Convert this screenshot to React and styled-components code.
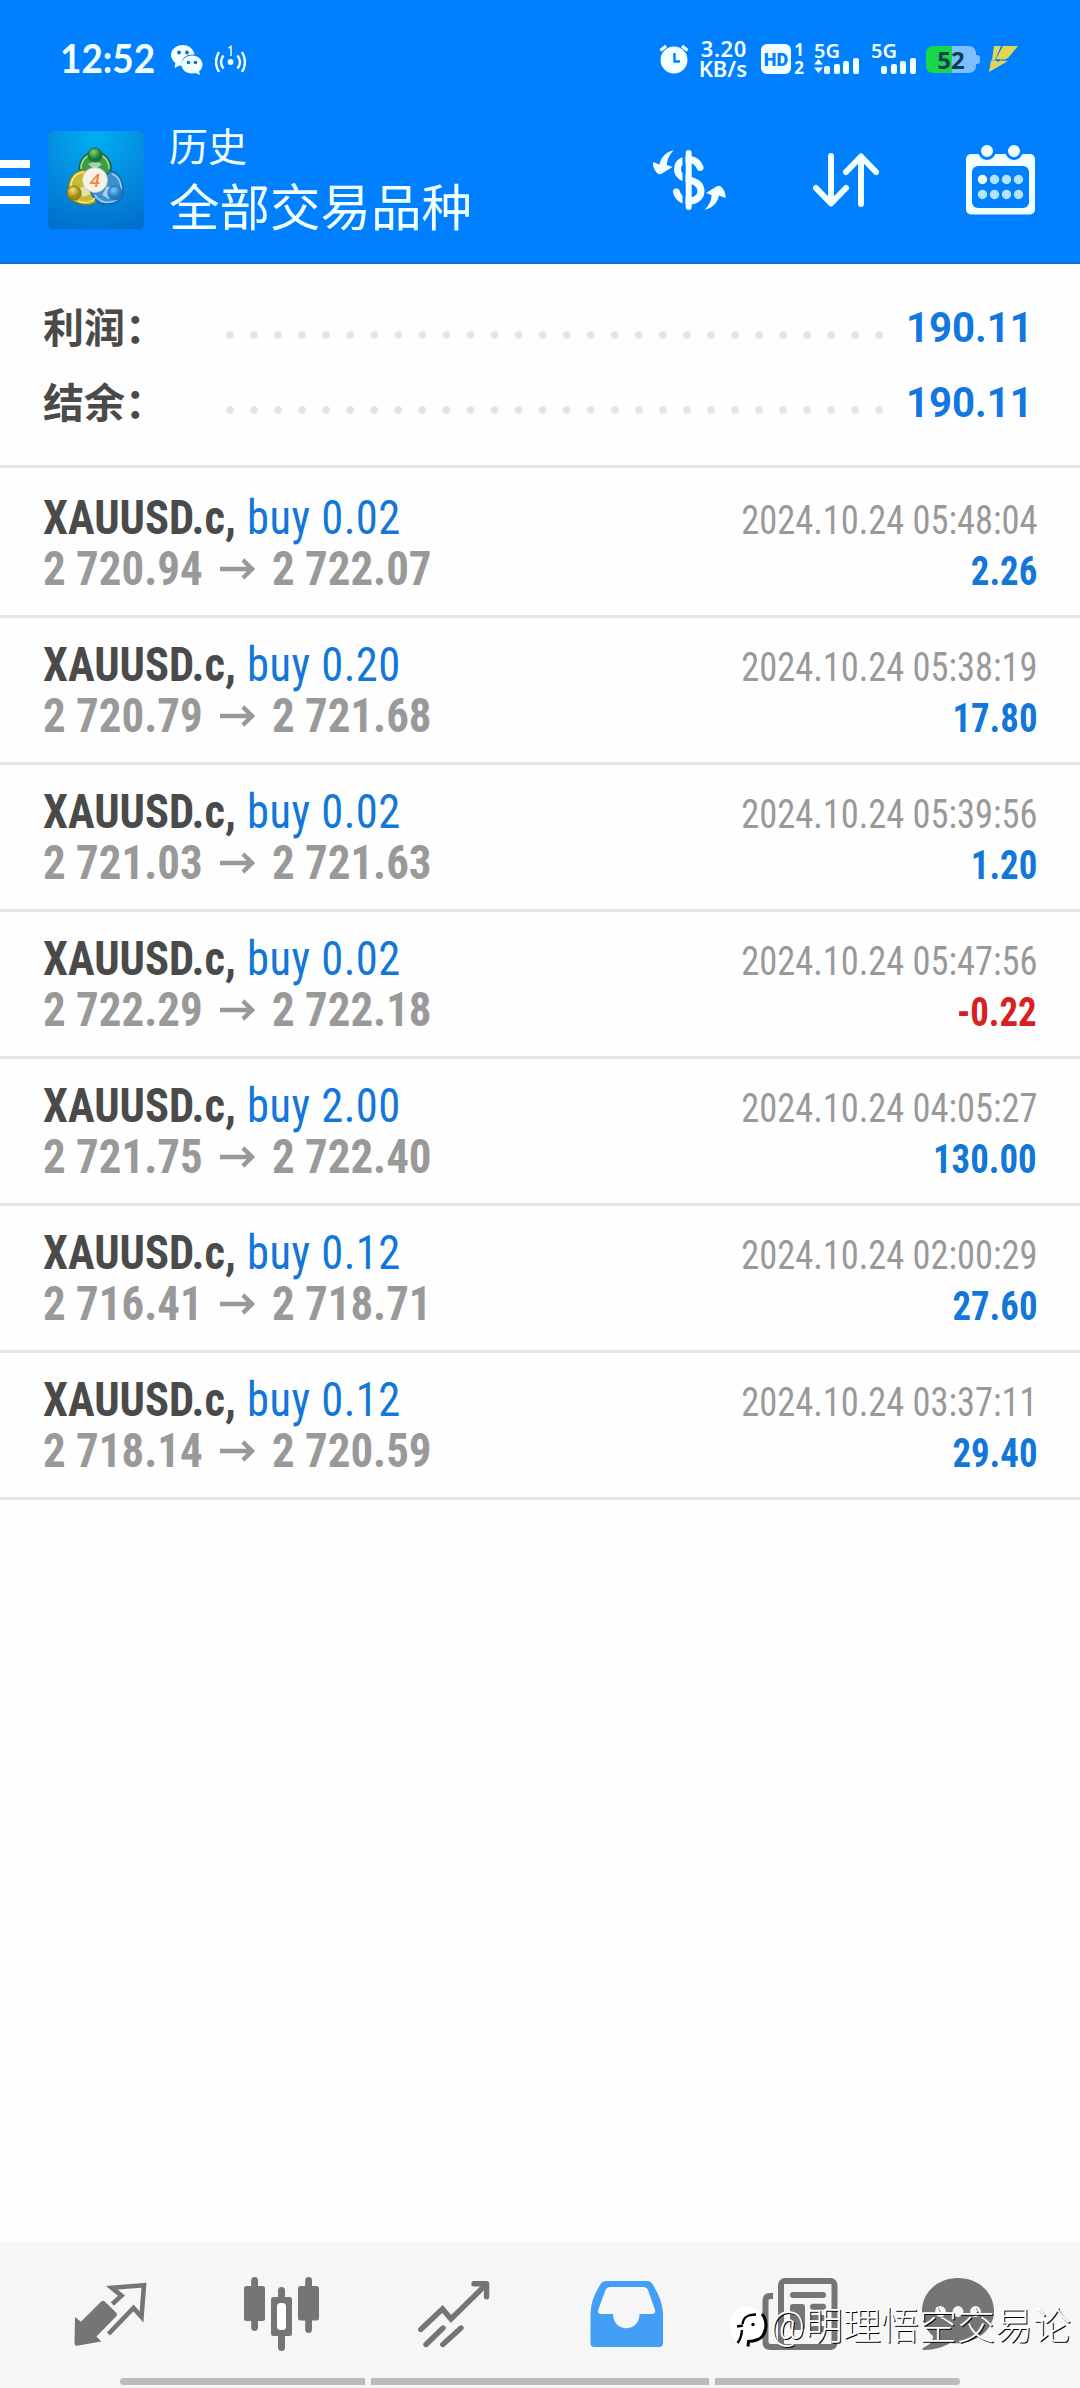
import styled, { createGlobalStyle } from "styled-components";

const deals = [
  { volume: "0.02", open: "2 720.94", close: "2 722.07", time: "2024.10.24 05:48:04", profit: "2.26" },
  { volume: "0.20", open: "2 720.79", close: "2 721.68", time: "2024.10.24 05:38:19", profit: "17.80" },
  { volume: "0.02", open: "2 721.03", close: "2 721.63", time: "2024.10.24 05:39:56", profit: "1.20" },
  { volume: "0.02", open: "2 722.29", close: "2 722.18", time: "2024.10.24 05:47:56", profit: "-0.22" },
  { volume: "2.00", open: "2 721.75", close: "2 722.40", time: "2024.10.24 04:05:27", profit: "130.00" },
  { volume: "0.12", open: "2 716.41", close: "2 718.71", time: "2024.10.24 02:00:29", profit: "27.60" },
  { volume: "0.12", open: "2 718.14", close: "2 720.59", time: "2024.10.24 03:37:11", profit: "29.40" },
];

const summary = [
  { label: "利润：", value: "190.11" },
  { label: "结余：", value: "190.11" },
];

const white = "#f2ffff";
const blue = "#007fff";
const gray = "#757575";

export default function App() {
  return (
    <Screen>
      <GlobalStyle />
      <Header>
        <StatusBar />
        <TitleBar>
          <Burger>
            <i />
            <i />
            <i />
          </Burger>
          <Logo />
          <Titles>
            <Title>历史</Title>
            <Subtitle>全部交易品种</Subtitle>
          </Titles>
          <Actions>
            <DollarIcon />
            <SortIcon />
            <CalendarIcon />
          </Actions>
        </TitleBar>
      </Header>

      <Summary>
        {summary.map((item) => (
          <SummaryRow key={item.label}>
            <Label>{item.label}</Label>
            <Dots />
            <Total>{item.value}</Total>
          </SummaryRow>
        ))}
      </Summary>

      <List>
        {deals.map((deal) => (
          <Deal key={deal.time}>
            <Line>
              <Instrument>
                <Symbol>XAUUSD.c,</Symbol> <Side>buy {deal.volume}</Side>
              </Instrument>
              <Time>{deal.time}</Time>
            </Line>
            <Line>
              <Prices>
                {deal.open}
                <ArrowIcon />
                {deal.close}
              </Prices>
              <Profit $loss={deal.profit.startsWith("-")}>{deal.profit}</Profit>
            </Line>
          </Deal>
        ))}
      </List>

      <Footer>
        <Nav>
          <QuotesIcon />
          <ChartIcon />
          <TradeIcon />
          <HistoryIcon />
          <NewsIcon />
          <ChatIcon />
        </Nav>
        <Gesture>
          <Bar $width={245} $side="left" />
          <Bar $width={338} />
          <Bar $width={245} $side="right" />
        </Gesture>
        <Watermark>
          <WatermarkIcon />
          @明理悟空交易论
        </Watermark>
      </Footer>
    </Screen>
  );
}

function StatusBar() {
  return (
    <Status>
      <Clock>12:52</Clock>
      <svg width="32" height="31" viewBox="0 0 32 31" fill={white}>
        <path d="M12 1C5 1 0 5.400 0 11c0 3.300 1.700 6 4.400 7.900L3.500 24l5-2.500 2.500.4C9.500 15 14 10 23.500 10.500 22.500 5 18 1 12 1z" />
        <path d="M21 11.500c-6 0-10.500 4-10.500 9s4.500 9 10.500 9c1.300 0 2.500-.2 3.600-.5L29 31l-1-3.500c2.200-1.700 3.500-4.200 3.500-7 0-5-4.500-9-10.500-9z" />
        <g fill="#1c6fb8">
          <circle cx="8" cy="8.500" r="1.900" />
          <circle cx="16" cy="8.500" r="1.900" />
          <circle cx="17.500" cy="18.500" r="1.800" />
          <circle cx="24.500" cy="18.500" r="1.800" />
        </g>
      </svg>
      <Hotspot width="31" height="29" viewBox="0 0 31 29" fill="none" stroke={white} strokeWidth="2.400">
        <circle cx="15.500" cy="17" r="2.900" fill={white} stroke="none" />
        <path d="M8.500 10.500q-5 6.500 0 13M22.500 10.500q5 6.500 0 13M4 7q-6 10 0 20M27 7q6 10 0 20" />
        <path d="M13.500 3.200L16 1.500V11" strokeWidth="1.500" />
      </Hotspot>
      <StatusRight>
        <svg width="30" height="30" viewBox="0 0 30 30">
          <circle cx="15" cy="16" r="13.500" fill={white} />
          <path d="M1.500 6.500L7 2M28.500 6.500L23 2" stroke={white} strokeWidth="3.200" />
          <path d="M15.500 9v8.500H21" stroke={blue} strokeWidth="2.400" fill="none" />
        </svg>
        <Speed>
          <span>3.20</span>
          <span>KB/s</span>
        </Speed>
        <Hd>HD</Hd>
        <Sims>
          <span>1</span>
          <span>2</span>
        </Sims>
        <Signal data />
        <Signal />
        <Battery>52</Battery>
        <Bolt width="30" height="26" viewBox="0 0 30 26" fill="#e3d455">
          <path d="M5 0h7L6 14H3z" />
          <path d="M14 0h15L19 12l-3 1.500h-5L10 13H7z" />
          <path d="M2 14.500h5.500l1 1.500 3-1.500 7.500.5L0 26z" />
        </Bolt>
      </StatusRight>
    </Status>
  );
}

function Signal({ data }) {
  return (
    <SignalBox $data={data}>
      <span>5G</span>
      <svg width="46" height="16" viewBox="0 0 46 16" fill={white}>
        {data && <path d="M0 6.500L4.500 1 9 6.500zM0 9.500h9L4.500 15z" />}
        <rect x="10" y="8" width="6" height="8" rx="2" />
        <rect x="20" y="6" width="6" height="10" rx="2" />
        <rect x="29" y="3" width="6" height="13" rx="2" />
        <rect x="39" y="0" width="6" height="16" rx="2" />
      </svg>
    </SignalBox>
  );
}

function Logo() {
  return (
    <LogoBox>
      <svg width="60" height="60" viewBox="0 0 60 60">
        <defs>
          <radialGradient id="green" cx=".4" cy=".3">
            <stop offset="0" stopColor="#83cf70" />
            <stop offset="1" stopColor="#157c35" />
          </radialGradient>
          <radialGradient id="gold" cx=".4" cy=".3">
            <stop offset="0" stopColor="#f5e670" />
            <stop offset="1" stopColor="#a08a12" />
          </radialGradient>
          <radialGradient id="sky" cx=".4" cy=".3">
            <stop offset="0" stopColor="#7cc8f5" />
            <stop offset="1" stopColor="#1c79c6" />
          </radialGradient>
        </defs>
        <g strokeWidth="1.200">
          <path d="M13 23c0-11 7-18 16-18s17 7 16 18c0 6-3 10-8 13L15 24z" fill="#3c9b48" stroke="#155e38" />
          <path d="M4 52C0 42 2 25 17 23c7-1 14 5 17 15L30 55c-7 5-18 3-26-3z" fill="#c5bb35" stroke="#6f7b21" />
          <path d="M56 51c3-9 0-25-11-27L24 42c2 9 8 16 16 15 7 0 12-2 16-6z" fill="#3c91cf" stroke="#1462a3" />
        </g>
        <g fill="none" strokeWidth="1.500">
          <path d="M15 22c0-9 6-15 14-15s14 6 14 15" stroke="#9fdb91" />
          <path d="M5 42c-1-9 4-16 13-17M12 54c7 3 14 1 17-3" stroke="#f3ec86" />
          <path d="M46 27c8 3 10 11 9 18M29 48c5 8 14 9 22 5" stroke="#9ad2f4" />
        </g>
        <path d="M22 17l7-3 7 3-7 6zM12 42l7-3 6 8-8 3zM36 48l5-9 7 4-5 9z" fill="#fff" opacity=".55" />
        <circle cx="29" cy="8" r="7" fill="url(#green)" stroke="#1c6b38" />
        <circle cx="8" cy="46" r="7" fill="url(#gold)" stroke="#7d7622" />
        <circle cx="49" cy="46" r="7" fill="url(#sky)" stroke="#2173b4" />
        <circle cx="29" cy="33" r="12.500" fill="#f7f1ec" stroke="#c9c6b4" strokeWidth=".8" />
        <text x="29" y="40" textAnchor="middle" fontFamily="Roboto, sans-serif" fontSize="19" fontWeight="500" fontStyle="italic" fill="#f08a3c">
          4
        </text>
      </svg>
    </LogoBox>
  );
}

function DollarIcon() {
  const arrow = "M21 0C13 2 8 7 6.500 14.500L0 12c-.5 5 2 9 4.500 11.500 1.500 1.200 3 .8 4.500 0L19.500 17l-5.500-2C14 9 17 4 21 0z";
  return (
    <svg width="73" height="60" viewBox="0 0 73 60" fill={white}>
      <path d={arrow} />
      <path d={arrow} transform="rotate(180 36.250 30)" />
      <g fill="none" stroke={white} strokeWidth="7" strokeLinecap="round">
        <path d="M47 17.500C45 12.500 41 9.500 36 9.500c-7 0-11.500 4-11.500 10C24.500 32 48 27 48 41c0 6-5 10-12 10-6 0-11-3-12.500-9" />
        <path d="M31 4v52" stroke={blue} strokeWidth="3" strokeLinecap="butt" />
        <path d="M35.700 3v54" strokeWidth="6" />
      </g>
    </svg>
  );
}

function SortIcon() {
  return (
    <svg width="66" height="54" viewBox="0 0 66 54" fill="none" stroke={white} strokeWidth="6" strokeLinecap="round" strokeLinejoin="round">
      <path d="M18 3v47M3 35l15 15.500L33 35M48 51V4M33 19L48 3.500 63 19" />
    </svg>
  );
}

function CalendarIcon() {
  return (
    <svg width="69" height="70" viewBox="0 0 69 70" fill={white}>
      <rect y="9" width="69" height="60.500" rx="5" />
      <rect x="6" y="21" width="57" height="42" rx="6" fill={blue} />
      <g stroke={blue} strokeWidth="3">
        <circle cx="21" cy="6" r="7.500" />
        <circle cx="48" cy="6" r="7.500" />
      </g>
      {[34.5, 49.5].map((y) =>
        [16.5, 28.5, 40.5, 52.5].map((x) => (
          <circle key={x + "-" + y} cx={x} cy={y} r="4.700" fill={x < 20 && y < 40 ? white : "#b5e3ff"} />
        ))
      )}
    </svg>
  );
}

function ArrowIcon() {
  return (
    <Arrow width="38" height="22" viewBox="0 0 38 22" fill="none" stroke="#999" strokeWidth="4.400">
      <path d="M0 11h34M24.500 2l10 9-10 9" />
    </Arrow>
  );
}

function QuotesIcon() {
  return (
    <svg width="73" height="65" viewBox="0 0 73 65">
      <path d="M1 35l6 4.800L27.500 19.300q1.500-1 3 0L42.500 31q1 1.500 0 3L22.500 54.500l4.700 5L3 63.800Q.5 64 .5 61.500z" fill={gray} />
      <path d="M38.300 22l9.200-8.300-9.700-7.900L70 3.200 67.500 35l-8-9L34.500 52" fill="none" stroke={gray} strokeWidth="4.600" />
    </svg>
  );
}

function ChartIcon() {
  return (
    <svg width="75" height="74" viewBox="0 0 75 74" fill={gray}>
      <rect y="9" width="21" height="35" rx="2.500" />
      <rect x="7.200" width="6.800" height="54" rx="3.400" />
      <rect x="27" y="20" width="21" height="39" rx="2.500" />
      <rect x="34" y="10" width="7" height="64" rx="3.500" />
      <rect x="33" y="26" width="9" height="27" rx="3.500" fill="#fff" />
      <rect x="54" y="9" width="21" height="34.500" rx="2.500" />
      <rect x="61.200" width="6.800" height="56" rx="3.400" />
    </svg>
  );
}

function TradeIcon() {
  return (
    <svg width="72" height="67" viewBox="0 0 72 67" fill="none" stroke={gray} strokeWidth="5.400" strokeLinecap="round">
      <path d="M2.700 48.500L24.500 28l8.500 10L68 3.500" strokeLinejoin="miter" />
      <path d="M56 2.700h12.600v13" strokeLinejoin="round" />
      <path d="M8 63.500L25 47M24.800 63.500L43 47" />
    </svg>
  );
}

function HistoryIcon() {
  return (
    <svg width="73" height="66" viewBox="0 0 73 66">
      <path
        fill="#439ff5"
        fillRule="evenodd"
        d="M16 0h41q4 0 6 4 9 14 10 28v30q0 4-4 4H4.500q-4 0-4-4V32Q1 18 10 4q2-4 6-4zm4 6q-3 0-4.500 3L8.200 29q-.8 4 2.800 4h12c0 19 26.500 19 26.500 0h12q4.500 0 3.500-4L58 9q-1.500-3-4.500-3z"
      />
    </svg>
  );
}

function NewsIcon() {
  return (
    <svg width="76" height="72" viewBox="0 0 76 72" fill="none" stroke={gray} strokeWidth="6">
      <rect x="19" y="3" width="53.500" height="66" rx="4" />
      <path d="M11 18H8q-4.500 0-4.500 5v41q0 5 5 5H24" />
      <path d="M31 17h30M51 28.700h10M51 40h10M51 51h10" strokeLinecap="round" />
      <path d="M28 29q0-3 3-3h9q3 0 3 3v20q0 3-3 3h-9q-3 0-3-3z" fill={gray} stroke="none" />
    </svg>
  );
}

function ChatIcon() {
  return (
    <svg width="72" height="72" viewBox="0 0 72 72" fill={gray}>
      <path d="M36 0C15 0 0 15 0 33c0 11 5 20 11 25 0 6-4 9-10 12-1 1-.5 2 1 2 10 0 20-3 26-7C53 68 72 52 72 33 72 15 57 0 36 0z" />
      <g fill="#f6f6f6">
        <circle cx="18.500" cy="33.500" r="5.400" />
        <circle cx="36" cy="33.500" r="5.400" />
        <circle cx="53.500" cy="33.500" r="5.400" />
      </g>
    </svg>
  );
}

function WatermarkIcon() {
  return (
    <svg width="42" height="46" viewBox="0 0 42 46">
      <path d="M18 4C8 4 2 12 2 21c0 8 3 13 8 19l13-2 10-6 5-10c0-8-8-18-20-18z" fill="#fff" />
      <g fill="none" stroke="#000">
        <path d="M14.500 21c1-7 5-9.500 13.500-9.500M9 23.500l6-1M14 27c-.5 6-2 10-4.500 13" strokeWidth="2.400" />
        <path d="M34 11c7 8 4 22-4 25.500-5 2-7 2-9.500 2l-.5 5" strokeWidth="3" />
      </g>
      <circle cx="25" cy="21.500" r="1.700" />
    </svg>
  );
}

const GlobalStyle = createGlobalStyle`
  * {
    box-sizing: border-box;
  }
  body {
    margin: 0;
    background: #fff;
  }
  svg {
    display: block;
    flex-shrink: 0;
  }
`;

const Screen = styled.main`
  display: flex;
  flex-direction: column;
  width: 1080px;
  height: 2388px;
  overflow: hidden;
  background: #fefefe;
  font-family: Roboto, "Noto Sans CJK SC", sans-serif;
`;

const Header = styled.header`
  height: 264px;
  background: ${blue};
  border-bottom: 2px solid #0d72d8;
  color: ${white};
`;

const Status = styled.div`
  display: flex;
  align-items: center;
  height: 118px;
  padding-left: 60px;
`;

const Clock = styled.div`
  width: 111px;
  margin-top: -2px;
  font-family: Lato, sans-serif;
  font-size: 41px;
  font-weight: 700;
  line-height: 48px;
  transform: scaleX(0.9);
  transform-origin: left;
`;

const Hotspot = styled.svg`
  margin-left: 12px;
`;

const StatusRight = styled.div`
  display: flex;
  align-items: center;
  margin-left: auto;
  padding-right: 61px;
`;

const Speed = styled.div`
  display: flex;
  flex-direction: column;
  align-items: flex-end;
  width: 58px;
  margin-top: -3px;
  font-family: "Noto Sans", sans-serif;
  font-size: 22px;
  font-weight: 600;
  line-height: 20px;
  span:first-child {
    letter-spacing: 0.6px;
  }
`;

const Hd = styled.div`
  width: 30px;
  height: 30px;
  margin-left: 14px;
  border-radius: 6px;
  background: ${white};
  color: ${blue};
  font-size: 18px;
  font-weight: 900;
  line-height: 31px;
  text-align: center;
`;

const Sims = styled.div`
  display: flex;
  flex-direction: column;
  align-items: center;
  width: 16px;
  font-family: "Noto Sans", sans-serif;
  font-size: 17px;
  font-weight: 700;
  line-height: 18px;
`;

const SignalBox = styled.div`
  width: 46px;
  height: 30px;
  margin-left: ${(props) => (props.$data ? "7px" : "11px")};
  font-family: "Noto Sans", sans-serif;
  font-size: 20px;
  font-weight: 600;
  line-height: 14px;
  span {
    display: block;
    height: 14px;
  }
`;

const Battery = styled.div`
  position: relative;
  width: 50px;
  height: 27px;
  margin-left: 9px;
  border-radius: 7px;
  background: linear-gradient(to right, #18d84a 53%, #7fbfff 53%);
  color: #0b3f55;
  font-family: "Noto Sans", sans-serif;
  font-size: 24px;
  font-weight: 700;
  line-height: 27px;
  text-align: center;
  &::after {
    content: "";
    position: absolute;
    top: 9px;
    right: -4px;
    width: 4px;
    height: 9px;
    border-radius: 0 3px 3px 0;
    background: #7fbfff;
  }
`;

const Bolt = styled.svg`
  margin-left: 13px;
`;

const TitleBar = styled.div`
  display: flex;
  align-items: center;
  height: 124px;
`;

const Burger = styled.div`
  display: flex;
  flex-direction: column;
  gap: 10px;
  width: 30px;
  margin-top: 4px;
  i {
    height: 8px;
    background: #fff;
  }
`;

const LogoBox = styled.div`
  display: flex;
  align-items: center;
  justify-content: center;
  width: 96px;
  height: 98px;
  margin-left: 18px;
  padding-bottom: 6px;
  border-radius: 6px;
  background: radial-gradient(circle at 50% 5%, #00b0f0 0, #048fe2 45%, #006bcb 100%);
  box-shadow: 0 0 3px #0a7be0;
`;

const Titles = styled.div`
  margin-left: 25px;
`;

const Title = styled.div`
  font-size: 39px;
  font-weight: 400;
  line-height: 56px;
`;

const Subtitle = styled.div`
  margin-top: 1px;
  font-size: 50.500px;
  font-weight: 400;
  line-height: 64px;
`;

const Actions = styled.div`
  display: flex;
  align-items: center;
  gap: 87px;
  margin-left: auto;
  padding-right: 45px;
`;

const Summary = styled.section`
  height: 204px;
  padding: 26px 47px 0 43px;
  border-bottom: 3px solid #e5e5e5;
`;

const SummaryRow = styled.div`
  display: flex;
  align-items: center;
  height: 75px;
`;

const Label = styled.div`
  width: 183px;
  margin-top: -5px;
  color: #4a4a4a;
  font-family: "Noto Sans CJK SC", sans-serif;
  font-size: 41px;
  font-weight: 700;
  line-height: 60px;
`;

const Dots = styled.div`
  width: 660px;
  height: 8px;
  margin-top: 14px;
  background: radial-gradient(circle at 4px 4px, #e4e4e4 3.500px, transparent 4.200px) 0 0 / 24.050px 8px repeat-x;
`;

const Total = styled.div`
  margin-left: auto;
  color: #1277e0;
  font-size: 42px;
  font-weight: 700;
  transform: scaleX(0.955);
  transform-origin: right;
`;

const List = styled.section`
  flex: 1;
  padding-top: 3px;
`;

const Deal = styled.article`
  height: 147px;
  padding: 21px 43px 0;
  border-bottom: 3px solid #e5e5e5;
  font-family: "Roboto Condensed", Roboto, sans-serif;
`;

const Line = styled.div`
  display: flex;
  align-items: baseline;
  justify-content: space-between;
  height: 51px;
  font-size: 48px;
  line-height: 51px;
  white-space: nowrap;
`;

const Instrument = styled.div`
  transform: scaleX(0.928);
  transform-origin: left;
`;

const Symbol = styled.span`
  color: #4a4a4a;
  font-weight: 700;
`;

const Side = styled.span`
  margin-left: 1px;
  color: #1277d8;
  letter-spacing: 0.500px;
`;

const Time = styled.div`
  color: #999;
  font-size: 40px;
  line-height: 44px;
  transform: scaleX(0.91);
  transform-origin: right;
`;

const Prices = styled.div`
  display: flex;
  align-items: baseline;
  color: #999;
  font-weight: 700;
  transform: scaleX(0.936);
  transform-origin: left;
`;

const Arrow = styled.svg`
  align-self: center;
  margin: 0 18px;
`;

const Profit = styled.div`
  color: ${(props) => (props.$loss ? "#d8201f" : "#1277d8")};
  font-size: 40px;
  font-weight: 700;
  line-height: 44px;
  transform: scaleX(0.92);
  transform-origin: right;
`;

const Footer = styled.footer`
  position: relative;
  height: 146px;
  background: #f6f6f6;
`;

const Nav = styled.nav`
  display: grid;
  grid-template-columns: 170px 174px 172px 172px 160px 72px;
  align-items: center;
  height: 136px;
  padding: 8px 0 0 74px;
`;

const Gesture = styled.div`
  display: flex;
  justify-content: center;
  gap: 6px;
`;

const Bar = styled.div`
  width: ${(props) => props.$width}px;
  height: 7px;
  border-radius: ${(props) =>
    props.$side === "left" ? "4px 0 0 4px" : props.$side === "right" ? "0 4px 4px 0" : "0"};
  background: #bcbcbc;
`;

const Watermark = styled.div`
  position: absolute;
  top: 59px;
  right: 9px;
  display: flex;
  align-items: center;
  color: #fff;
  font-size: 38px;
  font-weight: 300;
  line-height: 50px;
  text-shadow: 1px 1px 0 #000;
  white-space: nowrap;
`;
